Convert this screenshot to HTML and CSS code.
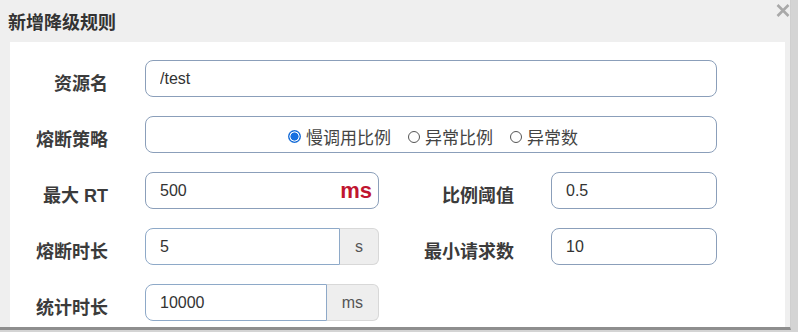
FILE: index.html
```html
<!DOCTYPE html>
<html>
<head>
    <meta charset="utf-8">
    <link rel="stylesheet" href="styles.css">
</head>
<body>
    <div class="dialog">
        <div class="dialog-header">
            <h3 class="dialog-title">新增降级规则</h3>
            <span class="close-btn">
                <svg width="14" height="13" viewBox="0 0 14 13">
                    <path d="M1.5 1 L12.5 12 M12.5 1 L1.5 12" stroke="#a9a9a9" stroke-width="2.6" fill="none"/>
                </svg>
            </span>
        </div>

        <div class="dialog-body">
            <form class="rule-form">
                <label class="form-label">资源名</label>
                <input class="form-input span-all" type="text" value="/test">

                <label class="form-label">熔断策略</label>
                <div class="radio-box span-all">
                    <span class="radio-item"><span class="radio checked"></span>慢调用比例</span>
                    <span class="radio-item"><span class="radio"></span>异常比例</span>
                    <span class="radio-item"><span class="radio"></span>异常数</span>
                </div>

                <label class="form-label">最大 RT</label>
                <div class="suffix-box">
                    <input class="bare-input" type="text" value="500">
                    <span class="unit-red">ms</span>
                </div>
                <label class="form-label">比例阈值</label>
                <input class="form-input" type="text" value="0.5">

                <label class="form-label">熔断时长</label>
                <div class="input-group">
                    <input class="group-input" type="text" value="5">
                    <span class="addon">s</span>
                </div>
                <label class="form-label">最小请求数</label>
                <input class="form-input" type="text" value="10">

                <label class="form-label">统计时长</label>
                <div class="input-group">
                    <input class="group-input" type="text" value="10000">
                    <span class="addon">ms</span>
                </div>
            </form>
        </div>
    </div>
</body>
</html>
```

FILE: styles.css
```css
body {
    margin: 0;
    width: 798px;
    height: 332px;
    overflow: hidden;
    background-color: #d4d4d4;
    font-family: "Liberation Sans", "Noto Sans CJK SC", sans-serif;
    color: #333;
}

.dialog {
    width: 790px;
    height: 327px;
    background-color: #efefef;
    border-right: 1px solid #cfcfcf;
    border-bottom: 3px solid #8e8e8e;
    overflow: hidden;
}

.dialog-header {
    height: 42px;
    display: flex;
    justify-content: space-between;
    align-items: flex-start;
}

.dialog-title {
    margin: 0;
    padding: 12px 0 0 8px;
    font-size: 18px;
    line-height: 22px;
    font-weight: bold;
    color: #333;
}

.close-btn {
    padding: 4px 0 0 0;
    line-height: 0;
}

.dialog-body {
    margin: 0 5px 0 10px;
    height: 285px;
    background-color: #fff;
    padding-top: 18px;
    box-sizing: border-box;
}

.rule-form {
    display: grid;
    grid-template-columns: 135px 234px 172px 166px;
    grid-auto-rows: 37px;
    row-gap: 19px;
}

.form-label {
    align-self: center;
    text-align: right;
    padding-right: 37px;
    padding-top: 6px;
    font-size: 18px;
    font-weight: bold;
    color: #3b3b3b;
    white-space: nowrap;
}

.span-all {
    grid-column: 2 / 5;
}

.form-input {
    height: 37px;
    box-sizing: border-box;
    border: 1px solid #8b9fba;
    border-radius: 8px;
    padding: 0 14px;
    font-family: inherit;
    font-size: 16px;
    color: #333;
    outline: none;
}

.radio-box {
    display: flex;
    justify-content: center;
    align-items: center;
    gap: 17px;
    border: 1px solid #8b9fba;
    border-radius: 8px;
    font-size: 17px;
    color: #444;
    padding: 4px 0 0 4px;
}

.radio-item {
    display: flex;
    align-items: center;
    gap: 5px;
}

.radio {
    width: 10px;
    height: 10px;
    border: 1.3px solid #555;
    border-radius: 50%;
    box-sizing: content-box;
}

.radio.checked {
    width: 13px;
    height: 13px;
    border: none;
    background: radial-gradient(circle, #1670e0 0 3.8px, #fff 4.3px 4.8px, #1a6fd8 5.3px);
}

.suffix-box {
    display: flex;
    align-items: center;
    border: 1px solid #8b9fba;
    border-radius: 8px;
    padding: 0 6px 0 14px;
}

.bare-input {
    flex: 1;
    min-width: 0;
    border: none;
    outline: none;
    padding: 0;
    font-family: inherit;
    font-size: 16px;
    color: #333;
}

.unit-red {
    color: #c0152f;
    font-size: 22px;
    font-weight: bold;
    line-height: 1;
    padding-top: 1px;
}

.input-group {
    display: flex;
}

.group-input {
    flex: 1;
    min-width: 0;
    box-sizing: border-box;
    border: 1px solid #8ea9c8;
    border-radius: 8px 0 0 8px;
    padding: 0 14px;
    font-family: inherit;
    font-size: 16px;
    color: #333;
    outline: none;
}

.addon {
    display: flex;
    align-items: center;
    padding: 0 15px;
    background-color: #eee;
    border: 1px solid #d8d8d8;
    border-left: none;
    border-radius: 0 6px 6px 0;
    font-size: 16px;
    color: #555;
}
```
